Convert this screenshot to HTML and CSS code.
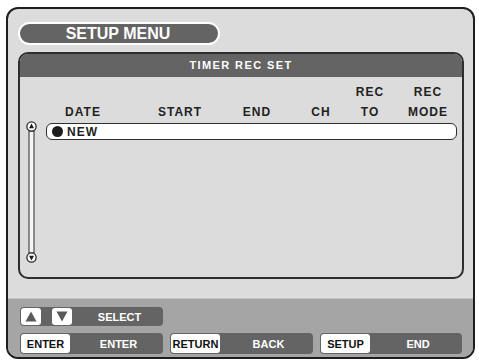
FILE: index.html
```html
<!DOCTYPE html>
<html>
<head>
<meta charset="utf-8">
<link rel="stylesheet" href="styles.css">
</head>
<body>
<div class="frame">
  <div class="top">
    <div class="title-pill">SETUP MENU</div>
    <div class="panel">
      <div class="panel-head">TIMER REC SET</div>
      <div class="panel-body">
        <div class="cols">
          <div class="hrow">
            <span class="c c1"></span><span class="c c2"></span><span class="c c3"></span><span class="c c4"></span><span class="c c5">REC</span><span class="c c6">REC</span>
          </div>
          <div class="hrow">
            <span class="c c1">DATE</span><span class="c c2">START</span><span class="c c3">END</span><span class="c c4">CH</span><span class="c c5">TO</span><span class="c c6">MODE</span>
          </div>
        </div>
        <svg class="scroll" width="11" height="142" viewBox="0 0 11 142">
          <rect x="3" y="10" width="5" height="122" fill="#f4f4f4" stroke="#2a2a2a" stroke-width="1"/>
          <circle cx="5.5" cy="5.5" r="4.6" fill="#fff" stroke="#2a2a2a" stroke-width="1.3"/>
          <path d="M5.5 2.6 L8 7.2 L3 7.2 Z" fill="#1a1a1a"/>
          <circle cx="5.5" cy="136.5" r="4.6" fill="#fff" stroke="#2a2a2a" stroke-width="1.3"/>
          <path d="M5.5 139.4 L8 134.8 L3 134.8 Z" fill="#1a1a1a"/>
        </svg>
        <div class="list">
          <div class="item"><span class="dot"></span><span class="item-text">NEW</span></div>
        </div>
      </div>
    </div>
  </div>
  <div class="bottom">
    <div class="brow">
      <div class="group g1">
        <span class="key sq"><svg width="12" height="11" viewBox="0 0 12 11"><path d="M6 0.5 L11.5 10.5 L0.5 10.5 Z" fill="#5a5a5a"/></svg></span>
        <span class="key sq sq2"><svg width="12" height="11" viewBox="0 0 12 11"><path d="M6 10.5 L11.5 0.5 L0.5 0.5 Z" fill="#5a5a5a"/></svg></span>
        <span class="glabel">SELECT</span>
      </div>
    </div>
    <div class="brow row2">
      <div class="group g1"><span class="key">ENTER</span><span class="glabel">ENTER</span></div>
      <div class="group g1"><span class="key">RETURN</span><span class="glabel">BACK</span></div>
      <div class="group g3"><span class="key">SETUP</span><span class="glabel">END</span></div>
    </div>
  </div>
</div>
</body>
</html>
```

FILE: styles.css
```css
* { box-sizing: border-box; }
html, body { margin: 0; padding: 0; background: #fff; }
body {
  font-family: "Liberation Sans", Arial, sans-serif;
  font-weight: bold;
}
.frame {
  margin: 7px 0 0 6px;
  width: 469px;
  height: 352px;
  border: 2px solid #1e1e1e;
  border-radius: 12px;
  overflow: hidden;
  display: flex;
  flex-direction: column;
  background: #dcdcdc;
}
.top {
  height: 289px;
  padding: 13px 0 0 10px;
  display: flex;
  flex-direction: column;
}
.title-pill {
  width: 202px;
  height: 23px;
  border: 2px solid #fff;
  border-radius: 12px;
  background: #646464;
  color: #fff;
  font-size: 16px;
  line-height: 19px;
  text-align: center;
  padding-right: 2px;
}
.panel {
  margin-top: 7px;
  width: 446px;
  height: 227px;
  border: 2px solid #2e2e2e;
  border-radius: 10px;
  overflow: hidden;
  display: flex;
  flex-direction: column;
}
.panel-head {
  height: 23px;
  background: #646464;
  color: #fff;
  font-size: 11px;
  letter-spacing: 1.4px;
  line-height: 23px;
  text-align: center;
}
.panel-body {
  flex: 1;
  display: grid;
  grid-template-columns: 11px 411px;
  grid-template-rows: auto 1fr;
  column-gap: 9px;
  padding: 8px 0 0 6px;
}
.cols {
  grid-column: 2;
  grid-row: 1;
  display: flex;
  flex-direction: column;
  gap: 6px;
  margin-bottom: 4px;
}
.hrow {
  display: flex;
  height: 14px;
  font-size: 12px;
  line-height: 14px;
  letter-spacing: 1px;
  color: #222;
}
.c { width: 44px; text-align: center; flex: none; white-space: nowrap; }
.c1 { margin-left: 15px; }
.c2 { margin-left: 53px; }
.c3 { margin-left: 33px; }
.c4 { margin-left: 20px; }
.c5 { margin-left: 5px; }
.c6 { margin-left: 14px; }
.scroll {
  grid-column: 1;
  grid-row: 2;
  display: block;
  margin-top: -2px;
}
.list {
  grid-column: 2;
  grid-row: 2;
}
.item {
  height: 17px;
  background: #fff;
  border: 1.5px solid #2e2e2e;
  border-radius: 6px;
  display: flex;
  align-items: center;
  padding-left: 5px;
  gap: 4px;
}
.dot {
  width: 11px;
  height: 11px;
  border-radius: 50%;
  background: #1c1c1c;
}
.item-text {
  font-size: 12px;
  letter-spacing: 1px;
  color: #1e1e1e;
  line-height: 14px;
}
.bottom {
  flex: 1;
  background: #a5a5a5;
  border-top: 1px solid #c4c4c4;
  padding: 8px 0 0 12px;
  display: flex;
  flex-direction: column;
  gap: 7px;
}
.brow {
  display: flex;
  gap: 7px;
  height: 19px;
}
.row2 { height: 21px; }
.group {
  background: #646464;
  border-radius: 4px;
  padding: 1px;
  display: flex;
  align-items: stretch;
}
.g1 { width: 143px; }
.g3 { width: 142px; }
.key {
  width: 49px;
  background: #fff;
  border-radius: 3px;
  color: #111;
  font-size: 11px;
  display: flex;
  align-items: center;
  justify-content: center;
}
.sq {
  width: 20px;
}
.sq2 { margin-left: 11px; }
.glabel {
  flex: 1;
  color: #fff;
  font-size: 11px;
  display: flex;
  align-items: center;
  justify-content: center;
  padding-left: 5px;
}
```
